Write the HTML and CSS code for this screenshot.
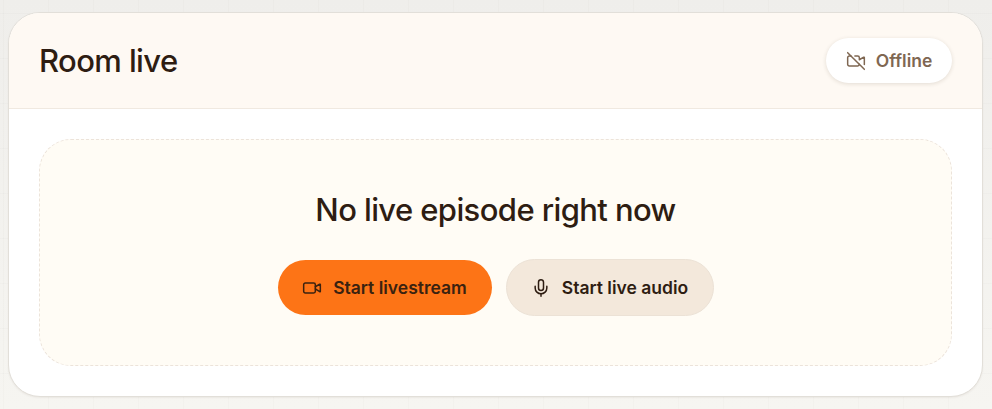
FILE: index.html
```html
<!DOCTYPE html>
<html lang="en">
<head>
<meta charset="utf-8">
<title>Room live</title>
<link rel="stylesheet" href="styles.css">
</head>
<body>
<section class="card">
  <header class="card-head">
    <h2 class="title">Room live</h2>
    <div class="status">
      <svg class="icon" viewBox="0 0 24 24"><path d="M10.66 6H14a2 2 0 0 1 2 2v2.5l5.248-3.062A.5.5 0 0 1 22 7.87v8.196"/><path d="M16 16a2 2 0 0 1-2 2H4a2 2 0 0 1-2-2V8a2 2 0 0 1 2-2h2"/><path d="m2 2 20 20"/></svg>
      <span>Offline</span>
    </div>
  </header>
  <div class="card-body">
    <div class="empty">
      <h3 class="empty-title">No live episode right now</h3>
      <div class="actions">
        <button class="btn btn-primary" type="button">
          <svg class="icon" viewBox="0 0 24 24"><path d="m16 13 5.223 3.482a.5.5 0 0 0 .777-.416V7.87a.5.5 0 0 0-.752-.432L16 10.5"/><rect x="2" y="6" width="14" height="12" rx="2"/></svg>
          <span>Start livestream</span>
        </button>
        <button class="btn btn-secondary" type="button">
          <svg class="icon" viewBox="0 0 24 24"><path d="M12 2a3 3 0 0 0-3 3v7a3 3 0 0 0 6 0V5a3 3 0 0 0-3-3Z"/><path d="M19 10v2a7 7 0 0 1-14 0v-2"/><line x1="12" x2="12" y1="19" y2="22"/></svg>
          <span>Start live audio</span>
        </button>
      </div>
    </div>
  </div>
</section>
</body>
</html>
```
FILE: styles.css
```css
* { box-sizing: border-box; }
html, body { height: 100%; }
body {
  margin: 0;
  padding: 12px 8px 12px;
  overflow: hidden;
  background-color: #f3f2ee;
  background-image:
    linear-gradient(rgba(60, 40, 20, .014) 1px, transparent 1px),
    linear-gradient(90deg, rgba(60, 40, 20, .014) 1px, transparent 1px),
    linear-gradient(180deg, #efeeeb, #f6f5f1);
  background-size: 45px 45px, 45px 45px, 100% 100%;
  background-position: 3px 13px, 3px 13px, 0 0;
  font-family: "Inter", sans-serif;
  color: #2b1d14;
}
.card {
  width: 975px;
  height: 385px;
  background: #fff;
  border: 1px solid #e2dfd9;
  border-radius: 32px;
  overflow: hidden;
  box-shadow: 0 1px 2px rgba(60, 40, 20, .06);
}
.card-head {
  height: 96px;
  padding: 0 30px;
  display: flex;
  align-items: center;
  justify-content: space-between;
  background: #fef9f3;
  border-bottom: 1px solid #f0e9e0;
}
.title {
  margin: 0 0 1px;
  font-size: 31px;
  font-weight: 500;
  letter-spacing: -0.6px;
  color: #2e1d12;
}
.status {
  width: 126px;
  height: 45px;
  display: flex;
  align-items: center;
  justify-content: center;
  gap: 10px;
  background: #fff;
  border-radius: 999px;
  box-shadow: 0 1px 4px rgba(60, 40, 20, .14);
  color: #7f6752;
  font-size: 17.5px;
  font-weight: 600;
}
.icon {
  width: 20px;
  height: 20px;
  flex: none;
  fill: none;
  stroke: currentColor;
  stroke-width: 1.8;
  stroke-linecap: round;
  stroke-linejoin: round;
}
.card-body { padding: 30px; }
.empty {
  height: 227px;
  padding-top: 51px;
  background: #fffcf5;
  border: 1px dashed #ece3da;
  border-radius: 32px;
  display: flex;
  flex-direction: column;
  align-items: center;
}
.empty-title {
  margin: 0;
  font-size: 31px;
  line-height: 38px;
  font-weight: 500;
  letter-spacing: -0.6px;
  color: #2e1d12;
}
.actions {
  margin-top: 30px;
  display: flex;
  align-items: center;
  gap: 14px;
}
.btn {
  display: flex;
  align-items: center;
  justify-content: center;
  gap: 11px;
  border-radius: 999px;
  font-family: "Inter", sans-serif;
  font-size: 17.5px;
  font-weight: 600;
  color: #2e1d12;
}
.btn-primary {
  width: 214px;
  height: 55px;
  background: #fd7416;
  border: 0;
  color: #3a2210;
}
.btn-secondary {
  width: 208px;
  height: 57px;
  background: #f3e8db;
  border: 1px solid #ece2d6;
}
```
